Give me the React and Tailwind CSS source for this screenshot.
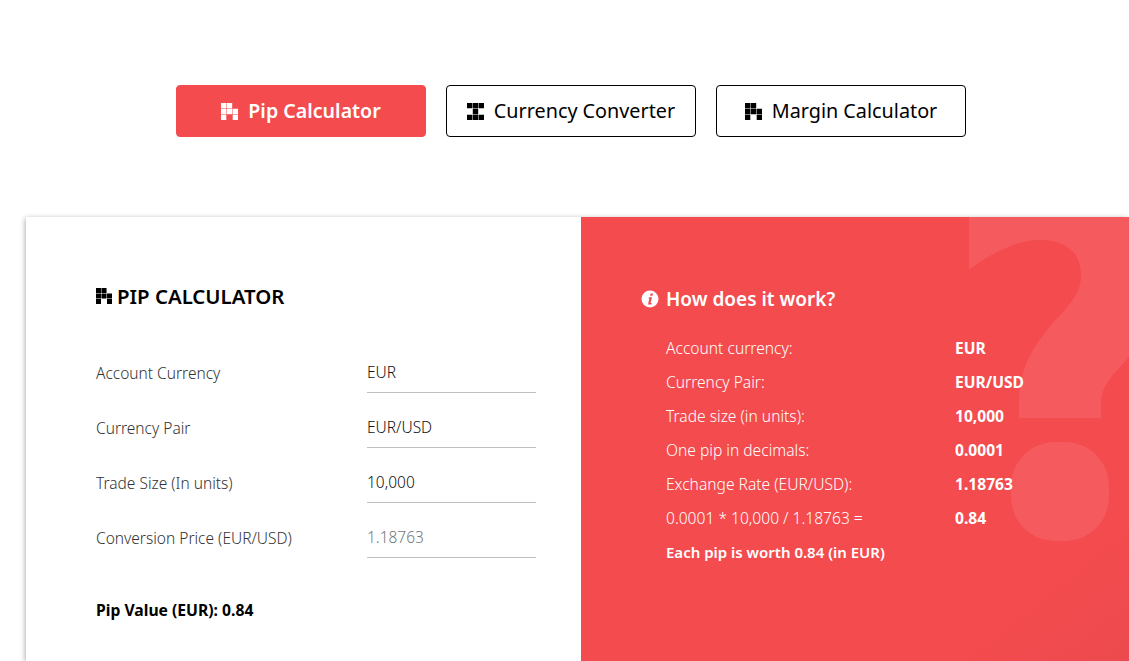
import React from 'react';

const font = 'font-["Noto_Sans",sans-serif]';

// pixel-block icons, three rows of three cells with hairline gaps
const PipIcon = ({ className }) => (
  <svg viewBox="0 0 17 17" className={className} fill="currentColor">
    <path d="M0 0h5.3v5.3H0zM5.8 0h5.4v5.3H5.8zM0 5.8h5.3v5.4H0zM5.8 5.8h5.4v5.4H5.8zM11.7 5.8H17v5.4h-5.3zM0 11.7h5.3V17H0zM11.7 11.7H17V17h-5.3z" />
  </svg>
);

const GridIcon = ({ className }) => (
  <svg viewBox="0 0 17 17" className={className} fill="currentColor">
    <path d="M0 0h5.3v5.3H0zM5.8 0h5.4v5.3H5.8zM11.7 0H17v5.3h-5.3zM5.8 5.8h5.4v5.4H5.8zM0 11.7h5.3V17H0zM5.8 11.7h5.4V17H5.8zM11.7 11.7H17V17h-5.3z" />
  </svg>
);

const InfoIcon = ({ className }) => (
  <svg viewBox="0 0 18 18" className={className}>
    <circle cx="9" cy="9" r="8.5" fill="#fff" />
    <path d="M9.6 3.4h2.4l-.5 2.4H9.1zM8 7.3h3l-1.4 5.6h1.2l-.4 1.5H7l1.3-5.6H7.6z" fill="#f34b4e" />
  </svg>
);

const tabs = [
  { label: 'Pip Calculator', icon: PipIcon, active: true },
  { label: 'Currency Converter', icon: GridIcon },
  { label: 'Margin Calculator', icon: PipIcon },
];

const fields = [
  { label: 'Account Currency', value: 'EUR' },
  { label: 'Currency Pair', value: 'EUR/USD' },
  { label: 'Trade Size (In units)', value: '10,000' },
  { label: 'Conversion Price (EUR/USD)', value: '1.18763', muted: true },
];

const steps = [
  ['Account currency:', 'EUR'],
  ['Currency Pair:', 'EUR/USD'],
  ['Trade size (in units):', '10,000'],
  ['One pip in decimals:', '0.0001'],
  ['Exchange Rate (EUR/USD):', '1.18763'],
  ['0.0001 * 10,000 / 1.18763 =', '0.84'],
];

const App = () => {
  return (
    <div className={`h-[661px] overflow-hidden bg-white ${font}`}>
      <div className="flex justify-center gap-5 pt-[85px] pl-[13px]">
        {tabs.map((tab) => (
          <button
            key={tab.label}
            className={`flex h-[52px] w-[250px] items-center justify-center gap-[10px] rounded border ${
              tab.active ? 'border-[#f34b4e] bg-[#f34b4e] text-[19.6px] font-semibold text-white' : 'border-black bg-white text-[19.8px] text-black'
            }`}
          >
            <tab.icon className="h-[17px] w-[17px]" />
            {tab.label}
          </button>
        ))}
      </div>

      <div className="mt-20 ml-[26px] flex h-[444px] shadow-[-1px_1px_5px_rgba(0,0,0,0.3)]">
        <div className="w-[555px] bg-white pt-[69px] pr-[45px] pl-[70px] text-black">
          <h2 className="flex h-[20px] items-center gap-[5px] text-[20.4px] font-semibold">
            <PipIcon className="h-4 w-4" />
            PIP CALCULATOR
          </h2>
          <div className="mt-[46px] flex flex-col">
            {fields.map((field) => (
              <div key={field.label} className="flex h-[55px] items-start">
                <span className="w-[271px] pt-[10px] text-[15.5px] font-light text-[#333]">{field.label}</span>
                <span className={`h-[41px] w-[169px] border-b border-[#c0c0c0] pt-[9px] text-[15.5px] font-light ${field.muted ? 'text-[#777]' : 'text-[#111]'}`}>
                  {field.value}
                </span>
              </div>
            ))}
          </div>
          <p className="mt-[27px] text-[15.7px] font-bold">Pip Value (EUR): 0.84</p>
        </div>

        <div className="relative flex-1 overflow-hidden bg-linear-to-br from-[#f34b4e] from-85% to-[#ec4a4e] pt-[70px] pl-[60px] text-white">
          <svg viewBox="0 0 160 330" className="absolute top-0 left-[388px] h-[330px] w-[160px]" fill="#f55a5f">
            <path d="M0 0H160V140C146 156 132 168 132 186V201H50V180C52 145 68 125 84 106C98 90 112 78 112 58C112 35 96 23 71 23C48 23 22 36 0 53Z" />
            <rect x="42" y="225" width="98" height="99" rx="44" />
          </svg>
          <h3 className="relative flex h-[24px] items-center gap-[7px] text-[19px] font-semibold">
            <InfoIcon className="h-[18px] w-[18px]" />
            How does it work?
          </h3>
          <div className="relative mt-[21px] ml-[25px] flex flex-col">
            {steps.map(([label, value]) => (
              <div key={label} className="flex h-[34px] items-center text-[15.6px]">
                <span className="w-[289px] font-light">{label}</span>
                <span className="font-bold">{value}</span>
              </div>
            ))}
            <p className="flex h-[32px] items-center text-[15px] font-semibold">Each pip is worth 0.84 (in EUR)</p>
          </div>
        </div>
      </div>
    </div>
  );
};

export default App;
